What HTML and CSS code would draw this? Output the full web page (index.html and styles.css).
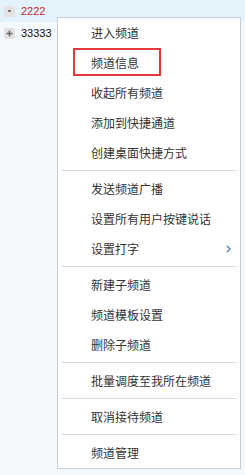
FILE: index.html
```html
<!DOCTYPE html>
<html lang="zh-CN">
<head>
<meta charset="utf-8">
<link rel="stylesheet" href="styles.css">
</head>
<body>
<div class="tree">
  <div class="node node-sel">
    <span class="tog"><span class="tog-dot"></span></span>
    <span class="label label-red">2222</span>
  </div>
  <div class="node">
    <span class="tog"><svg class="tog-plus" width="7" height="7" viewBox="0 0 7 7"><path d="M3.5 0.5v6M0.5 3.5h6" stroke="#6b6b6b" stroke-width="1.6"/></svg></span>
    <span class="label">33333</span>
  </div>
</div>
<div class="menu">
  <div class="item">进入频道</div>
  <div class="item item-hl"><span class="hl-box"></span>频道信息</div>
  <div class="item">收起所有频道</div>
  <div class="item">添加到快捷通道</div>
  <div class="item">创建桌面快捷方式</div>
  <div class="sep"></div>
  <div class="item">发送频道广播</div>
  <div class="item">设置所有用户按键说话</div>
  <div class="item item-sub">设置打字<svg class="arrow" width="5" height="8" viewBox="0 0 5 8"><path d="M0.8 0.8L4 4L0.8 7.2" fill="none" stroke="#6d93bd" stroke-width="1.6"/></svg></div>
  <div class="sep"></div>
  <div class="item">新建子频道</div>
  <div class="item">频道模板设置</div>
  <div class="item">删除子频道</div>
  <div class="sep"></div>
  <div class="item">批量调度至我所在频道</div>
  <div class="sep"></div>
  <div class="item">取消接待频道</div>
  <div class="sep"></div>
  <div class="item">频道管理</div>
</div>
</body>
</html>
```

FILE: styles.css
```css
html, body {
  margin: 0;
  padding: 0;
}
body {
  width: 245px;
  height: 475px;
  background: #f3f9fd;
  position: relative;
  overflow: hidden;
  font-family: "Liberation Sans", Arial, sans-serif;
}
.tree {
  display: flex;
  flex-direction: column;
}
.node {
  height: 22px;
  display: flex;
  align-items: center;
  padding-left: 4px;
  gap: 6px;
  font-size: 11px;
  color: #111;
}
.node-sel {
  background: #e4f2fc;
}
.tog {
  width: 11px;
  height: 11px;
  border-radius: 2px;
  background: #e2e2e2;
  display: flex;
  align-items: center;
  justify-content: center;
}
.tog-dot {
  width: 3px;
  height: 2px;
  background: #777;
}
.label-red {
  color: #c8262b;
}
.menu {
  position: absolute;
  left: 57px;
  top: 17px;
  width: 182px;
  background: #fff;
  border: 1px solid #c9cdd1;
  font-family: "Noto Sans CJK SC", "Microsoft YaHei", sans-serif;
  font-size: 12px;
  color: #333;
}
.item {
  height: 30px;
  line-height: 30px;
  padding-left: 33px;
  position: relative;
}
.item-sub {
  display: flex;
  align-items: center;
  justify-content: space-between;
  padding-right: 9px;
}
.hl-box {
  position: absolute;
  left: 15px;
  top: 0;
  width: 84px;
  height: 24px;
  border: 2px solid #e5383b;
}
.sep {
  height: 1px;
  margin: 2px 3px 3px 4px;
  background: #d6dce1;
}
```
